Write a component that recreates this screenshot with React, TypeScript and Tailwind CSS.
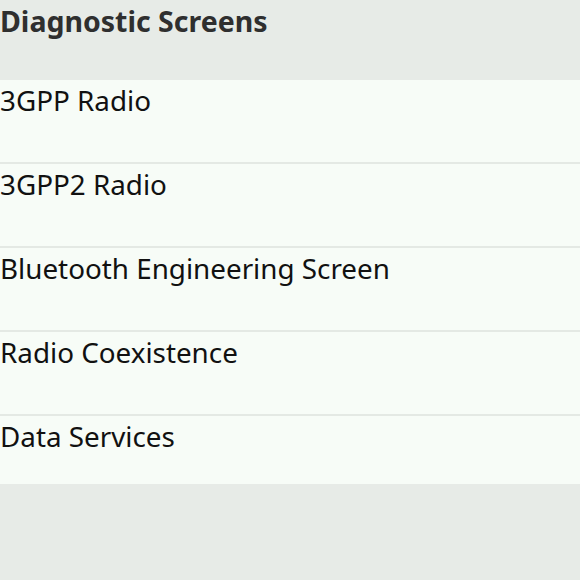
const items = [
	"3GPP Radio",
	"3GPP2 Radio",
	"Bluetooth Engineering Screen",
	"Radio Coexistence",
	"Data Services",
];

export default function App() {
	return (
		<div
			className="h-[580px] w-[580px] bg-[#e7ebe7]"
			style={{ fontFamily: '"Noto Sans", sans-serif' }}
		>
			{/* Title bar */}
			<div className="h-[80px] pt-[5px]">
				<h1 className="text-[28.5px] font-bold leading-[32px] text-[#2f2f2f]">
					Diagnostic Screens
				</h1>
			</div>
			{/* List */}
			<ul className="bg-[#f7fcf7]">
				{items.map((item, i) => (
					<li
						key={item}
						className={
							i < items.length - 1
								? "h-[84px] border-b-2 border-[#e4e9e4] pt-[4px]"
								: "h-[68px] pt-[4px]"
						}
					>
						<span className="block text-[27.8px] leading-[32px] text-[#111]">
							{item}
						</span>
					</li>
				))}
			</ul>
		</div>
	);
}
